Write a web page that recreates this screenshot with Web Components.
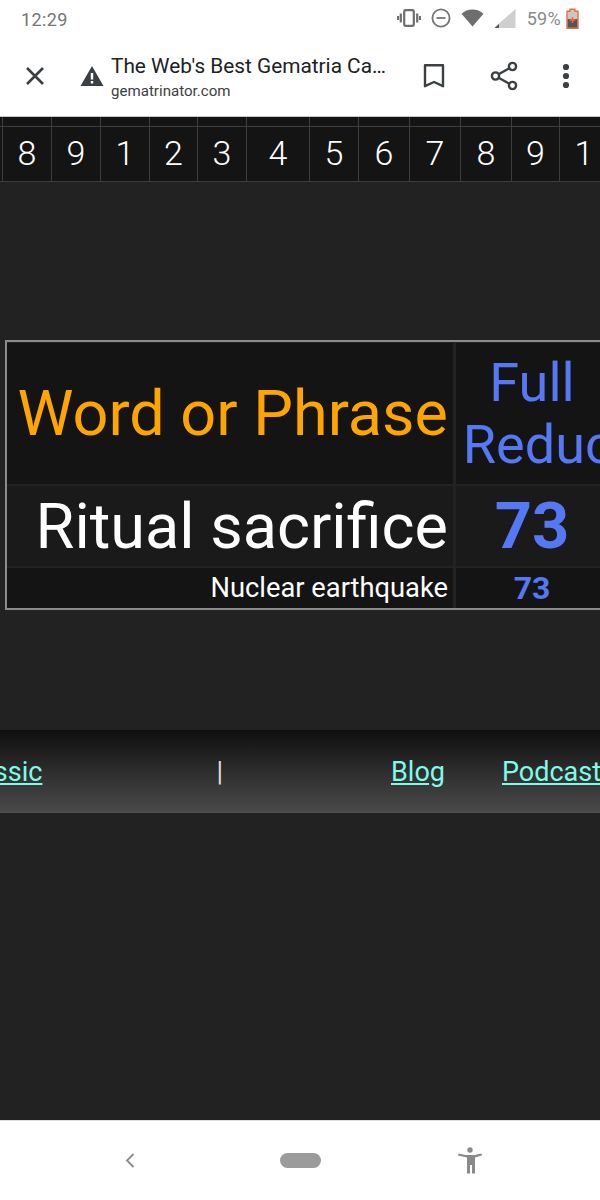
<!DOCTYPE html>
<html>
<head>
<meta charset="utf-8">
<title>Gematrinator</title>
<style>
  html, body { margin: 0; height: 100%; background: #222; font-family: Roboto, "Liberation Sans", sans-serif; }
  body { display: flex; flex-direction: column; width: 600px; height: 1200px; overflow: hidden; }
  web-view { flex: 1; min-height: 0; }
</style>
</head>
<body>
<status-bar></status-bar>
<browser-toolbar title-text="The Web's Best Gematria Ca…" url="gematrinator.com"></browser-toolbar>
<web-view>
  <digit-ruler></digit-ruler>
  <result-table></result-table>
  <site-footer></site-footer>
</web-view>
<nav-bar></nav-bar>

<script>
  class StatusBar extends HTMLElement {
    constructor() {
      super();
      this.attachShadow({ mode: 'open' });
      this.shadowRoot.innerHTML = `
        <style>
          :host { display: flex; align-items: center; height: 36px; background: #fff; padding: 0 21px; box-sizing: border-box; color: #757575; }
          .time { font-size: 18px; letter-spacing: 0.4px; flex: 1; padding-top: 2px; }
          .icons { display: flex; align-items: center; }
          svg { display: block; }
          .pct { font-size: 18px; color: #8a8a8a; margin: 0 5px 0 11px; letter-spacing: 0.3px; padding-top: 1px; }
        </style>
        <span class="time">12:29</span>
        <div class="icons">
          <svg width="24" height="18" viewBox="0 0 24 18" fill="none" stroke="#6e6e6e">
            <rect x="7.2" y="1.2" width="9.6" height="15.6" rx="1.5" stroke-width="2.2"/>
            <path d="M3.8 4.5v9M1 7v4M20.2 4.5v9M23 7v4" stroke-width="2.2"/>
          </svg>
          <svg style="margin-left:10px" width="20" height="20" viewBox="0 0 20 20" fill="none" stroke="#757575" stroke-width="1.8">
            <circle cx="10" cy="10" r="8.6"/><path d="M5.5 10h9"/>
          </svg>
          <svg style="margin-left:10px" width="23" height="18" viewBox="0 0 23 18"><path d="M0.5 4.8C3.5 2 7.2 0.5 11.500 0.5s8 1.5 11 4.3L11.5 17.5z" fill="#6e6e6e"/></svg>
          <svg style="margin-left:10px" width="22" height="19" viewBox="0 0 22 19"><path d="M21.5 0v19H0z" fill="#cfcfcf"/><path d="M5 15v4H0.6z" fill="#555"/></svg>
          <span class="pct">59%</span>
          <svg width="13" height="21" viewBox="0 0 13 21">
            <path d="M4 1.2h5v2h3v17H1v-17h3z" fill="#c8c8c8" stroke="#f4683a" stroke-width="1.4"/>
            <rect x="1.7" y="11" width="9.6" height="8.6" fill="#555"/>
            <path d="M3.6 12h5.8M6.5 9v6" stroke="#f4683a" stroke-width="1.6"/>
          </svg>
        </div>`;
    }
  }
  customElements.define('status-bar', StatusBar);

  class BrowserToolbar extends HTMLElement {
    constructor() {
      super();
      this.attachShadow({ mode: 'open' });
      this.shadowRoot.innerHTML = `
        <style>
          :host { display: flex; align-items: center; height: 81px; box-sizing: border-box; background: #fff; border-bottom: 1px solid #c8c8c8; color: #3c4043; }
          svg { display: block; flex: none; }
          .close { margin-left: 24px; }
          .warn { margin-left: 34px; }
          .text { width: 291px; margin-left: 7px; padding-top: 1px; }
          .title { font-size: 20.8px; line-height: 26px; color: #202124; white-space: nowrap; }
          .url { font-size: 15.1px; line-height: 20px; margin-top: 2px; color: #3c4043; }
          .mark { margin-left: 21px; }
          .share { margin-left: 45px; }
          .more { margin-left: 44px; }
        </style>
        <svg class="close" width="22" height="22" viewBox="0 0 22 22" fill="none" stroke="#3c4043" stroke-width="2.6"><path d="M3 3l16 16M19 3L3 19"/></svg>
        <svg class="warn" width="24" height="22" viewBox="0 0 24 22"><path d="M12 1L23.5 21H.5z" fill="#3c4043"/><path d="M10.8 8h2.4v6.5h-2.4zM10.8 16h2.4v2.4h-2.4z" fill="#fff"/></svg>
        <div class="text">
          <div class="title"></div>
          <div class="url"></div>
        </div>
        <svg class="mark" width="22" height="26" viewBox="0 0 22 26" fill="none" stroke="#3c4043" stroke-width="2.4"><path d="M2 2.2h18v21L11 19 2 23.2z" stroke-linejoin="round"/></svg>
        <svg class="share" width="28" height="30" viewBox="0 0 28 30" fill="none" stroke="#3c4043" stroke-width="2.4"><circle cx="22.5" cy="5.5" r="3.6"/><circle cx="5.5" cy="15" r="3.6"/><circle cx="22.5" cy="24.5" r="3.6"/><path d="M8.7 13.2l10.6-6M8.7 16.8l10.6 6"/></svg>
        <svg class="more" width="8" height="26" viewBox="0 0 8 26" fill="#3c4043"><circle cx="4" cy="4" r="3.1"/><circle cx="4" cy="13" r="3.1"/><circle cx="4" cy="22" r="3.1"/></svg>`;
      this.shadowRoot.querySelector('.title').textContent = this.getAttribute('title-text');
      this.shadowRoot.querySelector('.url').textContent = this.getAttribute('url');
    }
  }
  customElements.define('browser-toolbar', BrowserToolbar);

  class WebView extends HTMLElement {
    constructor() {
      super();
      this.attachShadow({ mode: 'open' });
      this.shadowRoot.innerHTML = `
        <style>
          :host { display: flex; flex-direction: column; background: #222; overflow: hidden; }
        </style>
        <slot></slot>`;
    }
  }
  customElements.define('web-view', WebView);

  class DigitRuler extends HTMLElement {
    constructor() {
      super();
      this.attachShadow({ mode: 'open' });
      const digits = ['8', '9', '1', '2', '3', '4', '5', '6', '7', '8', '9', '1'];
      const widths = [49, 49, 49, 48, 49, 63, 49, 51, 51, 51, 48, 49];
      const top = widths.map(() => '<div class="cell"></div>').join('');
      const bottom = digits.map(d => `<div class="cell">${d}</div>`).join('');
      this.shadowRoot.innerHTML = `
        <style>
          :host { display: block; margin-bottom: 158px; background: #222; overflow: hidden; flex: none; }
          .row { display: grid; grid-template-columns: ${widths.map(w => w + 'px').join(' ')}; margin-left: 2px; }
          .cell { box-sizing: border-box; border-left: 1px solid #3d3d3d; background: #141414; }
          .strip .cell { height: 9px; }
          .line { height: 1px; background: #3d3d3d; }
          .nums .cell { height: 54px; line-height: 53px; text-align: center; color: #fff; font-size: 34px; font-weight: 300; }
          .bar { background: #141414; }
        </style>
        <div class="bar"><div class="row strip">${top}</div></div>
        <div class="line"></div>
        <div class="bar"><div class="row nums">${bottom}</div></div>
        <div class="line"></div>`;
    }
  }
  customElements.define('digit-ruler', DigitRuler);

  class ResultTable extends HTMLElement {
    constructor() {
      super();
      this.attachShadow({ mode: 'open' });
      this.shadowRoot.innerHTML = `
        <style>
          :host { display: block; width: 660px; margin-left: 5px; margin-bottom: 120px; flex: none; box-sizing: border-box; border: 2px solid #8c8c8c; background: #222; }
          .grid { display: grid; grid-template-columns: 446px 152px 1fr; grid-template-rows: 141px 80px 40px; gap: 2px 3px; padding-top: 1px; }
          .cell { background: #141414; display: flex; align-items: center; justify-content: center; white-space: nowrap; min-width: 0; }
          .word { justify-content: flex-end; padding-right: 5px; color: #fff; font-size: 63px; }
          .head { color: #ffa500; font-size: 63px; }
          .alt { background: #1a1a1a; }
          .word.small { font-size: 27.3px; }
          .blue { color: #5578f5; }
          .label { font-size: 54px; line-height: 62px; text-align: center; }
          .label .second { margin-left: 12px; }
          .num { font-weight: 700; font-size: 65px; }
          .num.small { font-size: 32px; }
        </style>
        <div class="grid">
          <div class="cell word head">Word or Phrase</div>
          <div class="cell blue label"><div><div>Full</div><div class="second">Reduc</div></div></div>
          <div class="cell"></div>
          <div class="cell word alt">Ritual sacrifice</div>
          <div class="cell blue num alt">73</div>
          <div class="cell alt"></div>
          <div class="cell word small">Nuclear earthquake</div>
          <div class="cell blue num small">73</div>
          <div class="cell"></div>
        </div>`;
    }
  }
  customElements.define('result-table', ResultTable);

  class SiteFooter extends HTMLElement {
    constructor() {
      super();
      this.attachShadow({ mode: 'open' });
      this.shadowRoot.innerHTML = `
        <style>
          :host { display: flex; align-items: center; height: 83px; flex: none; box-sizing: border-box; padding-top: 2px; background: linear-gradient(#0f0f0f, #4a4a4a); border-bottom: 1px solid #505050; font-size: 27px; white-space: nowrap; overflow: hidden; }
          a { color: #7ffbe8; text-decoration: underline; }
          .sep { color: #ddd; }
          .classic { margin-left: -45px; }
        </style>
        <a class="classic" href="#">Classic</a>
        <span class="sep" style="margin-left:174px">|</span>
        <a href="#" style="margin-left:168px">Blog</a>
        <a href="#" style="margin-left:57px">Podcast</a>`;
    }
  }
  customElements.define('site-footer', SiteFooter);

  class NavBar extends HTMLElement {
    constructor() {
      super();
      this.attachShadow({ mode: 'open' });
      this.shadowRoot.innerHTML = `
        <style>
          :host { display: flex; align-items: center; height: 80px; flex: none; box-sizing: border-box; background: #fff; border-top: 1px solid #ddd; }
          svg { display: block; flex: none; }
          .pill { width: 41px; height: 15px; border-radius: 8px; background: #9b9b9b; margin-left: 145px; }
        </style>
        <svg style="margin-left:125px" width="10" height="15" viewBox="0 0 10 15" fill="none" stroke="#8a8a8a" stroke-width="1.8"><path d="M8.5 1L2 7.5 8.5 14"/></svg>
        <div class="pill"></div>
        <svg style="margin-left:137px" width="24" height="27" viewBox="0 0 24 27" fill="#8a8a8a"><circle cx="12" cy="3" r="2.7"/><path d="M0.5 6.5l7 1.600h9l7-1.600.5 1.900-7 2.200V26.5h-3V18h-2v8.500H9V10.600L0 8.400z"/></svg>`;
    }
  }
  customElements.define('nav-bar', NavBar);
</script>
</body>
</html>
